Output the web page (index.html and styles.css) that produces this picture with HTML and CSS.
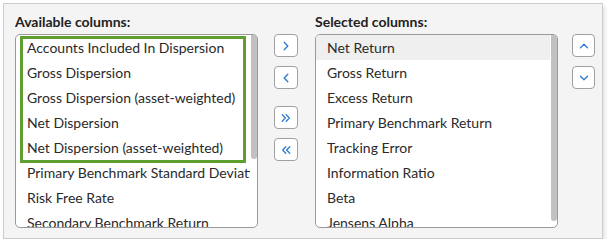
FILE: index.html
```html
<!DOCTYPE html>
<html>
<head>
<meta charset="utf-8">
<link rel="stylesheet" href="styles.css">
</head>
<body>
<div class="panel">
  <div class="label">Available columns:</div>
  <div class="spacer"></div>
  <div class="label">Selected columns:</div>
  <div class="spacer"></div>

  <div class="list">
    <div class="items">
      <div class="highlight-box"></div>
      <div class="item">Accounts Included In Dispersion</div>
      <div class="item">Gross Dispersion</div>
      <div class="item">Gross Dispersion (asset-weighted)</div>
      <div class="item">Net Dispersion</div>
      <div class="item">Net Dispersion (asset-weighted)</div>
      <div class="item">Primary Benchmark Standard Deviation</div>
      <div class="item">Risk Free Rate</div>
      <div class="item">Secondary Benchmark Return</div>
      <div class="item">Secondary Benchmark Standard Deviation</div>
      <div class="item">Sharpe Ratio</div>
      <div class="item">Sortino Ratio</div>
      <div class="item">Standard Deviation</div>
    </div>
    <div class="thumb thumb-left"></div>
  </div>

  <div class="btns btns-left">
    <button class="btn" aria-label="Add">
      <svg width="10" height="12" viewBox="0 0 10 12"><path d="M3.2 2.2 L6.8 6 L3.2 9.8" /></svg>
    </button>
    <button class="btn" aria-label="Remove">
      <svg width="10" height="12" viewBox="0 0 10 12"><path d="M6.8 2.2 L3.2 6 L6.8 9.8" /></svg>
    </button>
    <button class="btn btn-gap" aria-label="Add all">
      <svg width="12" height="12" viewBox="0 0 12 12"><path d="M2.2 2.8 L5.4 6 L2.2 9.2 M6.2 2.8 L9.4 6 L6.2 9.2" /></svg>
    </button>
    <button class="btn" aria-label="Remove all">
      <svg width="12" height="12" viewBox="0 0 12 12"><path d="M5.8 2.8 L2.6 6 L5.8 9.2 M9.8 2.8 L6.6 6 L9.8 9.2" /></svg>
    </button>
  </div>

  <div class="list">
    <div class="items">
      <div class="item selected">Net Return</div>
      <div class="item">Gross Return</div>
      <div class="item">Excess Return</div>
      <div class="item">Primary Benchmark Return</div>
      <div class="item">Tracking Error</div>
      <div class="item">Information Ratio</div>
      <div class="item">Beta</div>
      <div class="item">Jensens Alpha</div>
    </div>
    <div class="thumb thumb-right"></div>
  </div>

  <div class="btns btns-right">
    <button class="btn btn-narrow" aria-label="Move up">
      <svg width="12" height="10" viewBox="0 0 12 10"><path d="M2.5 6.8 L6 3.2 L9.5 6.8" /></svg>
    </button>
    <button class="btn btn-narrow" aria-label="Move down">
      <svg width="12" height="10" viewBox="0 0 12 10"><path d="M2.5 3.2 L6 6.8 L9.5 3.2" /></svg>
    </button>
  </div>
</div>
</body>
</html>
```

FILE: styles.css
```css
html, body {
  margin: 0;
  padding: 0;
  background: #ffffff;
}

body {
  font-family: Lato, "Open Sans", Arial, sans-serif;
  color: #333333;
}

.panel {
  box-sizing: border-box;
  margin: 3px 0 0 3px;
  width: 600px;
  height: 236px;
  border: 1px solid #cccccc;
  background: #f4f4f4;
  box-shadow: 2px 3px 4px rgba(0, 0, 0, 0.12);
  padding: 9px 0 0 11px;
  display: grid;
  grid-template-columns: 243px 57px 243px 40px;
  grid-template-rows: 21px 194px;
}

.label {
  font-weight: bold;
  font-size: 14px;
  line-height: 17px;
  color: #222222;
}

.list {
  position: relative;
  box-sizing: border-box;
  height: 194px;
  border: 1px solid #9a9a9a;
  border-radius: 5px;
  background: #ffffff;
  overflow: hidden;
}

.items {
  position: relative;
  margin-right: 7px;
  overflow: hidden;
}

.thumb {
  position: absolute;
  right: 0;
  top: 0;
  width: 6px;
  background: #c1c1c1;
  border-radius: 0 3px 3px 3px;
}

.thumb-left {
  height: 124px;
}

.thumb-right {
  height: 186px;
}

.item {
  height: 25px;
  line-height: 26px;
  padding-left: 11px;
  font-size: 14px;
  white-space: nowrap;
  color: #2a2a2a;
}

.item.selected {
  background: #efefef;
}

.highlight-box {
  position: absolute;
  left: 4px;
  top: 1px;
  width: 226px;
  height: 127px;
  box-sizing: border-box;
  border: 3px solid #5f9f30;
  pointer-events: none;
}

.btns {
  display: flex;
  flex-direction: column;
  align-items: flex-start;
}

.btns-left {
  padding-left: 16px;
}

.btns-right {
  padding-left: 14px;
}

.btn {
  box-sizing: border-box;
  width: 24px;
  height: 23px;
  margin: 0 0 9px 0;
  padding: 0;
  border: 1px solid #a0a0a0;
  border-radius: 4px;
  background: #ffffff;
  display: flex;
  align-items: center;
  justify-content: center;
}

.btn-narrow {
  width: 23px;
}

.btn-gap {
  margin-top: 8px;
}

.btn svg path {
  fill: none;
  stroke: #2f7ad6;
  stroke-width: 1.3;
  stroke-linecap: round;
  stroke-linejoin: round;
}
```
